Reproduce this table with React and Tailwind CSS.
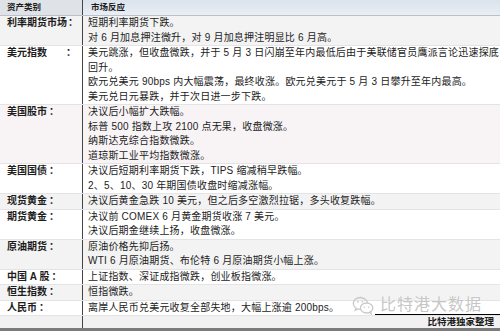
import React from "react";

const GRAY = "bg-[#f3f3f3]";
const PINK = "bg-[#f8f4f6]";
const WHITE = "bg-white";

const rows = [
  {
    label: "利率期货市场",
    gap: "ml-[1px]",
    bg: GRAY,
    lines: [
      "短期利率期货下跌。",
      "对 6 月加息押注微升，对 9 月加息押注明显比 6 月高。",
    ],
  },
  {
    label: "美元指数",
    gap: "ml-[19px]",
    bg: WHITE,
    lines: [
      "美元跳涨，但收盘微跌，并于 5 月 3 日闪崩至年内最低后由于美联储官员鹰派言论迅速探底",
      "回升。",
      "欧元兑美元 90bps 内大幅震荡，最终收涨。欧元兑美元于 5 月 3 日攀升至年内最高。",
      "美元兑日元暴跌，并于次日进一步下跌。",
    ],
  },
  {
    label: "美国股市",
    gap: "ml-[2px]",
    bg: PINK,
    lines: [
      "决议后小幅扩大跌幅。",
      "标普 500 指数上攻 2100 点无果，收盘微涨。",
      "纳斯达克综合指数微跌。",
      "道琼斯工业平均指数微涨。",
    ],
  },
  {
    label: "美国国债",
    gap: "ml-[2px]",
    bg: WHITE,
    lines: [
      "决议后短期利率期货下跌，TIPS 缩减稍早跌幅。",
      "2、5、10、30 年期国债收盘时缩减涨幅。",
    ],
  },
  {
    label: "现货黄金",
    gap: "ml-[2px]",
    bg: GRAY,
    lines: ["决议后黄金急跌 10 美元，但之后多空激烈拉锯，多头收复跌幅。"],
  },
  {
    label: "期货黄金",
    gap: "ml-[2px]",
    bg: WHITE,
    lines: [
      "决议前 COMEX 6 月黄金期货收涨 7 美元。",
      "决议后期金继续上扬，收盘微涨。",
    ],
  },
  {
    label: "原油期货",
    gap: "ml-[2px]",
    bg: GRAY,
    lines: [
      "原油价格先抑后扬。",
      "WTI 6 月原油期货、布伦特 6 月原油期货小幅上涨。",
    ],
  },
  {
    label: "中国 A 股",
    gap: "ml-[2px]",
    bg: WHITE,
    lines: ["上证指数、深证成指微跌，创业板指微涨。"],
  },
  {
    label: "恒生指数",
    gap: "ml-[2px]",
    bg: GRAY,
    lines: ["恒指微跌。"],
  },
  {
    label: "人民币",
    gap: "ml-[2px]",
    bg: WHITE,
    lines: ["离岸人民币兑美元收复全部失地，大幅上涨逾 200bps。"],
  },
];

// watermark logo: two speech bubbles
const WeChatMark = () => (
  <svg width="22" height="19" viewBox="0 0 22 19" fill="none">
    <path
      d="M8.5 1.5c-4.1 0-7.2 2.7-7.2 6 0 1.9 1 3.5 2.6 4.6l-0.7 2.1 2.5-1.3c0.9 0.3 1.8 0.4 2.8 0.4"
      stroke="#c9c9c9"
      strokeWidth="1.3"
      strokeLinecap="round"
    />
    <path
      d="M15.6 6.2c-1.6-2.8-4.2-4.5-7.1-4.7"
      stroke="#c9c9c9"
      strokeWidth="1.3"
      strokeLinecap="round"
    />
    <ellipse cx="14.6" cy="12" rx="6.2" ry="5" stroke="#c9c9c9" strokeWidth="1.3" fill="white" fillOpacity="0.6" />
    <path d="M17.5 16.4l1.6 1.6-0.4-2.3" stroke="#c9c9c9" strokeWidth="1.2" strokeLinecap="round" />
    <circle cx="5.8" cy="5.8" r="0.9" fill="#c9c9c9" />
    <circle cx="10.4" cy="5.8" r="0.9" fill="#c9c9c9" />
    <circle cx="12.4" cy="11.2" r="0.8" fill="#c9c9c9" />
    <circle cx="16.6" cy="11.2" r="0.8" fill="#c9c9c9" />
  </svg>
);

export default function App() {
  return (
    <div
      className="relative w-[500px] h-[331px] overflow-hidden bg-white text-[#1c1c1c]"
      style={{ fontFamily: '"Liberation Sans", "Noto Sans CJK SC", sans-serif' }}
    >
      <div className="flex flex-col">
        {/* header */}
        <div className="flex h-[16px] bg-[#e0e6ed] border-b border-[#b9c2cc] text-[8.5px] font-bold leading-[15px]">
          <div className="w-[83px] shrink-0 border-r border-[#444] pl-[7px] bg-[#dfe3e8]">
            资产类别
          </div>
          <div className="flex-1 pl-[8px] bg-gradient-to-b from-[#dbe3ec] to-[#e9eef3]">
            市场反应
          </div>
        </div>

        {rows.map((row) => (
          <div key={row.label} className={`flex border-b border-[#e4e4e4] ${row.bg}`}>
            <div className="w-[83px] shrink-0 border-r border-[#444] pl-[7px] text-[10px] font-bold leading-[14.5px] whitespace-nowrap">
              {row.label}
              <span className={row.gap}>：</span>
            </div>
            <div className="flex-1 pl-[5px] text-[10px] tracking-[0.2px] leading-[14.5px] whitespace-nowrap overflow-hidden">
              {row.lines.map((line, i) => (
                <div key={i}>{line}</div>
              ))}
            </div>
          </div>
        ))}

        {/* footer */}
        <div className="flex h-[12px] bg-[#f1f1f1]">
          <div className="w-[83px] shrink-0 border-r border-[#444]" />
          <div className="flex-1 flex justify-end">
            <div className="w-[125px] -mt-[2px] border-t border-black text-right pr-[6px] text-[9.5px] font-bold leading-[13px]">
              比特港独家整理
            </div>
          </div>
        </div>
        <div className="h-[3px] bg-[#7b7b7b]" />
      </div>

      {/* watermark */}
      <div className="absolute left-[352px] top-[295px] flex items-center gap-[6px] pointer-events-none">
        <WeChatMark />
        <span className="text-[16px] tracking-[1px] leading-[20px] text-[#c6c6c6] [text-shadow:0_0_2px_white]">
          比特港大数据
        </span>
      </div>
    </div>
  );
}
